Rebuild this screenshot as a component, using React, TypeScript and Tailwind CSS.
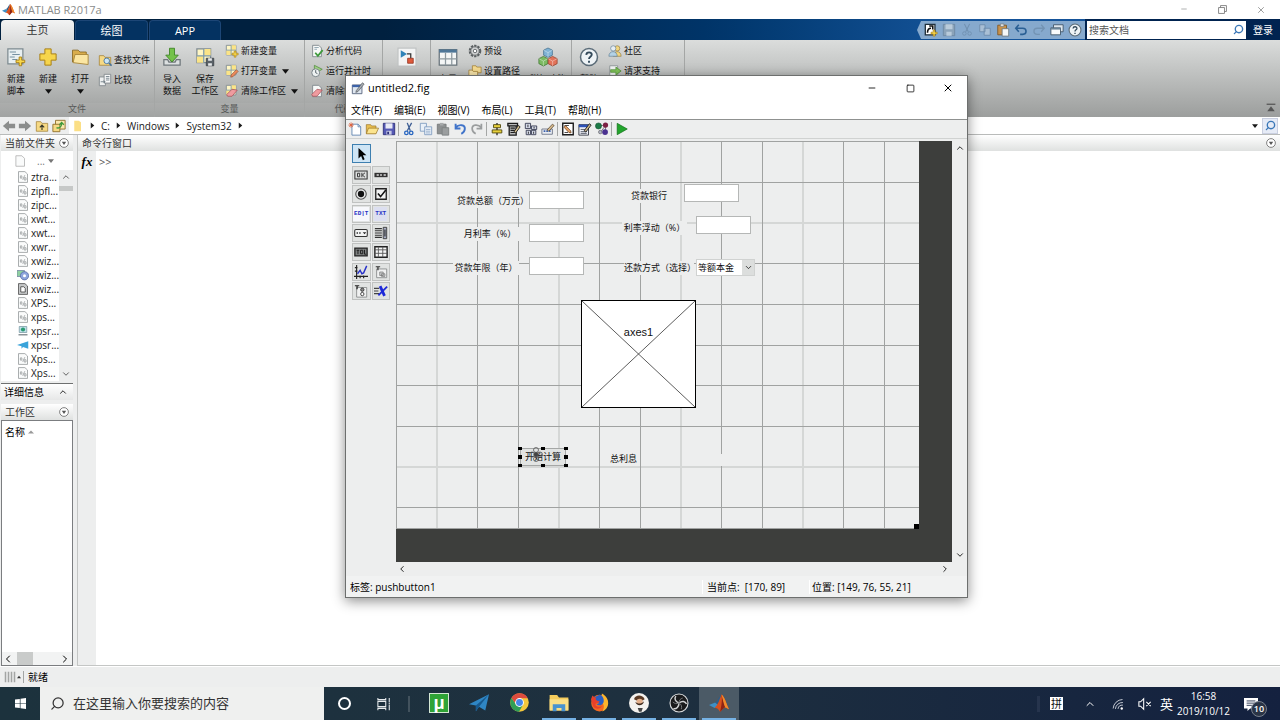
import type { ReactNode } from "react"
import { ChevronDown, ChevronLeft, ChevronRight, ChevronUp, Minus, Search, Square, X } from "lucide-react"
import { clsx } from "clsx"

interface IconProps {
  className?: string
  children: ReactNode
}

// every drawing below uses a 16 unit box
function Icon({ className = "size-[14px]", children }: IconProps) {
  return (
    <svg viewBox="0 0 16 16" className={clsx("shrink-0", className)} fill="none" aria-hidden="true">
      {children}
    </svg>
  )
}

function DownMark({ className = "size-[7px]" }: { className?: string }) {
  return (
    <Icon className={className}>
      <path d="M0 3h16l-8 10z" fill="currentColor" />
    </Icon>
  )
}

function RightMark() {
  return (
    <Icon className="mx-[5px] size-[7px]">
      <path d="M4 1v14l8-7z" fill="currentColor" />
    </Icon>
  )
}

function MatlabLogo({ className }: { className?: string }) {
  return (
    <Icon className={className}>
      <path d="M0 9.5 5 7.5 7.5 9.5 4.5 12z" fill="#3f8fc4" />
      <path d="M5 7.5C7 6.5 8 3 10 1.2L7.5 9.5z" fill="#2b5f8c" />
      <path d="M10 1.2C8.5 5 7.5 9 4.5 12c2-.3 3.200.9 4.300 3 1.800-.8 3-3.800 4.200-3.500 1 .2 1.800.8 3 1.500C14 9 12.500 3 10 1.200z" fill="#d9501e" />
      <path d="M10 1.200C10.800 5 10 11 8.800 15c1.800-.8 3-3.800 4.200-3.500C12 8 11.200 4 10 1.200z" fill="#8e2415" />
      <path d="M10 1.200c1 3.500 1.500 7 3 10.300 1 .2 1.800.8 3 1.500C14 9 12.500 3 10 1.200z" fill="#f08a2c" />
    </Icon>
  )
}

const plus = <path d="M10.500 8h2v2.500H15v2h-2.500V15h-2v-2.500H8v-2h2.500z" fill="#f8d749" stroke="#a67c14" strokeWidth=".7" />
const sheet = <path d="M3 1.500h7l3 3v10H3z" fill="#f7f9f8" stroke="#7d8589" />
const gridSheet = (
  <>
    <path d="M1.500 1.500h11v11h-11z" fill="#fff6c4" stroke="#7f8b93" />
    <path d="M7 1.500h5.500V7H7zM1.500 7H7v5.500H1.500z" fill="#fbe487" />
    <path d="M7 1.500v11M1.500 7h11" stroke="#7f9cae" />
  </>
)
const folder = <path d="M1.500 3h5l1.500 2h6.500v9h-13z" fill="#f6d984" stroke="#9d7a2d" strokeWidth=".8" />
const eraser = <path d="m2 12 6-6 6 1-6 7H3z" fill="#ef9b9f" stroke="#a34d55" strokeWidth=".8" />

const icons: Record<string, ReactNode> = {
  script: (
    <>
      <path d="M1.500 1.500h12v12h-12z" fill="#e8eff1" stroke="#7d8a90" />
      <path d="M3 4h5M5 6h6M3 8h4M5 10h4" stroke="#7590a0" strokeWidth=".8" />
      {plus}
    </>
  ),
  create: <path d="M5.500 1.500h5v4h4v5h-4v4h-5v-4h-4v-5h4z" fill="#f6d54c" stroke="#a98118" strokeWidth=".8" />,
  open: (
    <>
      <path d="M2 2.500h4.500L8 4h5v8H2z" fill="#d9ad4c" stroke="#8c6c26" strokeWidth=".7" />
      <path d="M4 6h10.500v8L2.500 12.500z" fill="#fbe6a2" stroke="#a68336" strokeWidth=".7" />
    </>
  ),
  find: (
    <>
      {folder}
      <circle cx="10" cy="9" r="3.200" fill="#cbe6f7" stroke="#46729b" />
      <path d="m12.500 11.500 3 3" stroke="#46729b" strokeWidth="1.800" />
    </>
  ),
  compare: (
    <>
      <path d="M1.500 4.500h7v10h-7z" fill="#eef0f0" stroke="#80878b" />
      <path d="M7 1.500h7.500v10H7z" fill="#f8f9f9" stroke="#80878b" />
      <path d="M3 10h5M6.500 8.500 8 10l-1.500 1.500M9 4h4M9 6h4M9 8h4" stroke="#62717b" strokeWidth=".9" />
    </>
  ),
  importData: (
    <>
      <path d="M1.500 10h3l1 2h5l1-2h3v4.500h-13z" fill="#dce0e1" stroke="#6e767a" />
      <path d="M6 1h4v5.500h3L8 12 3 6.500h3z" fill="#74c24a" stroke="#3d8423" strokeWidth=".7" />
    </>
  ),
  saveSpace: (
    <>
      {gridSheet}
      <path d="M9 9h6v6H9z" fill="#5a6268" stroke="#363c40" strokeWidth=".6" />
      <path d="M10.500 9h3v2h-3zM10.500 13h3v2h-3z" fill="#e6e9ea" />
    </>
  ),
  newVar: (
    <>
      {gridSheet}
      {plus}
    </>
  ),
  openVar: (
    <>
      {gridSheet}
      <path d="m7 12.500 6-6 2 2-6 6-2.500.5z" fill="#ec8a5a" stroke="#8c4a2e" strokeWidth=".7" />
    </>
  ),
  clearSpace: (
    <>
      {gridSheet}
      {eraser}
    </>
  ),
  analyze: (
    <>
      {sheet}
      <path d="M5 4h5M5 6h3" stroke="#8aa0ac" />
      <path d="m6 10 3 3.500L14.500 7" stroke="#3e9a3b" strokeWidth="2" />
    </>
  ),
  runTime: (
    <>
      <path d="M5 1.500 14 6l-9 5z" fill="#9ed084" stroke="#4c8738" strokeWidth=".8" />
      <circle cx="6.500" cy="10" r="4.500" fill="#eef2f2" stroke="#6f7a7f" />
      <path d="M6.500 7v3l2 1" stroke="#45525a" />
    </>
  ),
  clearCmd: (
    <>
      {sheet}
      {eraser}
    </>
  ),
  simulink: (
    <>
      <path d="M.8.8h14.400v14.400H.8z" fill="#f3f4f4" stroke="#c1c4c4" />
      <path d="M8 5.500h3V9" stroke="#333" />
      <path d="M8.500 9H13v4H8.500z" fill="#df5a3c" stroke="#8c2b18" strokeWidth=".6" />
      <path d="M3 2.500 8 5.500 3 8.500z" fill="#2f83b8" />
    </>
  ),
  layout: (
    <>
      <path d="M1 2h14v12.500H1z" fill="#f4f6f6" stroke="#68747b" />
      <path d="M1 2h14v2.500H1z" fill="#4e7697" />
      <path d="M6 4.500v10M11 4.500v10M1 9.500h14" stroke="#8d999f" />
    </>
  ),
  gear: (
    <>
      <circle cx="8" cy="8" r="6" stroke="#5a5f61" strokeWidth="2.400" strokeDasharray="2.600 1.200" />
      <circle cx="8" cy="8" r="4.800" fill="#d4d6d6" stroke="#5a5f61" />
      <circle cx="8" cy="8" r="2" fill="#fff" stroke="#5a5f61" />
    </>
  ),
  path: (
    <>
      <path d="M5 2h4l1 1.500h5V10H5z" fill="#f6dc92" stroke="#9d7a2d" strokeWidth=".8" />
      <path d="M1 7h4l1 1.500h5V14H1z" fill="#fbe7ac" stroke="#9d7a2d" strokeWidth=".8" />
    </>
  ),
  cubes: (
    <>
      <path d="m8 .8 3.500 1.700v4L8 8.300 4.500 6.500v-4z" fill="#7fb3d5" stroke="#44708f" strokeWidth=".6" />
      <path d="m4.300 7.500 3.600 1.800v4l-3.600 1.900-3.600-1.900v-4z" fill="#7cba63" stroke="#3f7530" strokeWidth=".6" />
      <path d="m11.700 7.500 3.600 1.800v4l-3.600 1.900-3.600-1.900v-4z" fill="#e2735a" stroke="#96402c" strokeWidth=".6" />
      <path d="m4.500 2.500 3.500 2 3.500-2M8 4.500v3.800M.7 9.300l3.600 2 3.600-2M4.300 11.300v3.900M8.100 9.300l3.600 2 3.600-2M11.700 11.300v3.900" stroke="#fff" strokeOpacity=".6" strokeWidth=".5" />
    </>
  ),
  help: (
    <>
      <circle cx="8" cy="8" r="6.800" fill="#eef3f6" stroke="#5b6c78" strokeWidth="1.200" />
      <path d="M5.800 6.300C6 3.500 10.300 3.700 10.200 6.200 10.100 7.800 8 7.800 8 9.600M8 11v1.500" stroke="#32495a" strokeWidth="1.500" />
    </>
  ),
  community: (
    <>
      <circle cx="10.500" cy="5" r="3" fill="#f2d67f" stroke="#8b7336" strokeWidth=".7" />
      <path d="M6 14c0-7 9-7 9 0z" fill="#f2d67f" stroke="#8b7336" strokeWidth=".7" />
      <circle cx="6" cy="5" r="3" fill="#e6edf2" stroke="#5a7990" strokeWidth=".7" />
      <path d="M1 14c0-7 9.500-7 9.500 0z" fill="#b3d2e6" stroke="#5a7990" strokeWidth=".7" />
    </>
  ),
  support: (
    <>
      <path d="M2 2h9v12H2z" fill="#f1f3f3" stroke="#8b9295" />
      <path d="M3 6.500h6V3.500L15 8l-6 4.500v-3H3z" fill="#82c45b" stroke="#3d8423" strokeWidth=".7" />
    </>
  ),
  shortcut: (
    <>
      <path d="M1.500 1.500h11v12h-11z" fill="#fff" stroke="#20303c" strokeWidth="1.500" />
      <path d="M4 11c0-4 2-5 4-5M6 3.500h4v4" stroke="#111" strokeWidth="1.800" />
      {plus}
    </>
  ),
  disk: (
    <>
      <path d="M1.500 1.500h13v13h-13z" fill="#8ba3b9" stroke="#6d88a2" />
      <path d="M4 1.500h8V7H4zM5 10h6v4.500H5z" fill="#b9cbdb" />
    </>
  ),
  cutDim: (
    <>
      <path d="m5 1 4.500 9M11 1 6.500 10" stroke="#7090b0" strokeWidth="1.200" />
      <circle cx="5" cy="12" r="2" stroke="#7090b0" />
      <circle cx="11" cy="12" r="2" stroke="#7090b0" />
    </>
  ),
  copyDim: <path d="M2 2h6v8H2zM7 6h7v8H7z" fill="#a9bfd5" stroke="#6d8bab" />,
  clipboard: (
    <>
      <path d="M2 2.500h10v11H2z" fill="#c8924c" stroke="#805827" />
      <path d="M5 1h4v3H5z" fill="#dde1e3" stroke="#69737a" strokeWidth=".7" />
      <path d="M7 6.500h7.500v8.500H7z" fill="#f5f7f8" stroke="#6d7980" />
    </>
  ),
  undo: <path d="M2 6h8c5 0 5 7 0 7H7M5.500 2 2 6l3.500 4" stroke="#2a5f94" strokeWidth="1.800" />,
  redoDim: <path d="M14 6H6C1 6 1 13 6 13h3M10.500 2 14 6l-3.500 4" stroke="#7393b3" strokeWidth="1.500" />,
  windows: (
    <>
      <path d="M4 2h11v8H4z" fill="#dfe7ee" stroke="#3f5567" />
      <path d="M1 5.500h11v8H1z" fill="#f8fafb" stroke="#3f5567" />
      <path d="M1 5.500h11v2H1z" fill="#6b8598" />
    </>
  ),
  folderUp: (
    <>
      {folder}
      <path d="M8 12.500v-5M5.500 9.500 8 7l2.500 2.500" stroke="#3b3a2a" strokeWidth="1.300" />
    </>
  ),
  folderBrowse: (
    <>
      <path d="M4 1.500h11v10H4z" fill="#fbe7ac" stroke="#8c6c26" />
      <path d="M1 6h8v8.500H1z" fill="#f6d984" stroke="#8c6c26" />
      <path d="M5 10c3 1 6-1 6-5M8.500 6.500 11 4l2.500 2.500" stroke="#3e9a3b" strokeWidth="1.500" />
    </>
  ),
  figure: (
    <>
      <path d="M1.500 4.500h11v10h-11z" fill="#dfe7f0" stroke="#53617a" />
      <path d="M1.500 4.500h11V7h-11z" fill="#3c62a8" />
      <path d="m6 11 7-9 2 1.500-7 8.500-2.500 1z" fill="#a9aeb3" stroke="#464b50" strokeWidth=".7" />
    </>
  ),
  newFile: (
    <>
      <path d="M4.500 2.500h7l3 3v9.500h-10z" fill="#fff" stroke="#5b82b0" />
      <path d="M11.500 2.500v3h3" stroke="#5b82b0" />
      <path d="M3.500.5v6M.5 3.500h6M1.500 1.500l4 4M5.500 1.500l-4 4" stroke="#e0603a" />
    </>
  ),
  openFile: (
    <>
      <path d="M1.500 3h5l1 1.500h5V13h-11z" fill="#e9bf52" stroke="#9b7626" strokeWidth=".8" />
      <path d="M4 7h11.500l-3 6.500h-11z" fill="#fbe48e" stroke="#9b7626" strokeWidth=".8" />
    </>
  ),
  saveFile: (
    <>
      <path d="M1.500 1.500h13v13h-13z" fill="#5458b4" stroke="#2b2e77" />
      <path d="M4 1.500h8V7.500H4z" fill="#e8eaf6" />
      <path d="M5 10h6v4.500H5z" fill="#c6c9e4" />
      <path d="M6 11h2v3H6z" fill="#2b2e77" />
    </>
  ),
  cut: (
    <>
      <path d="m6 1 3.500 9M11 1 6 10" stroke="#3d5e94" strokeWidth="1.500" />
      <circle cx="5" cy="12.500" r="2" stroke="#2866c0" strokeWidth="1.500" />
      <circle cx="10.500" cy="12.500" r="2" stroke="#2866c0" strokeWidth="1.500" />
    </>
  ),
  copy: (
    <>
      <path d="M1.500 1.500h7v9h-7z" fill="#e9f0f8" stroke="#7f9cc0" />
      <path d="M6.500 5.500h8v9h-8z" fill="#e9f0f8" stroke="#7f9cc0" />
      <path d="M8 8.500h5M8 10.500h5M8 12.500h5" stroke="#7f9cc0" strokeWidth=".8" />
    </>
  ),
  paste: (
    <>
      <path d="M1.500 2.500h10v11h-10z" fill="#8d9091" stroke="#76797a" />
      <path d="M4.500 1h4v3h-4z" fill="#a7aaab" />
      <path d="M7 6.500h7.500V15H7z" fill="#9b9e9f" stroke="#7d8081" />
    </>
  ),
  undoBlue: <path d="M3 6.500C7 2 14 3 13.500 8c-.2 2.500-2 4.500-4 5.500M3 2v5.500h5.500" stroke="#3f73c9" strokeWidth="2.200" />,
  redoGray: <path d="M13 6.500C9 2 2 3 2.500 8c.2 2.500 2 4.500 4 5.500M13 2v5.500H7.500" stroke="#9a9d9e" strokeWidth="2" />,
  align: (
    <>
      <path d="M8 1v14" stroke="#222" strokeWidth="1.500" />
      <path d="M4 3h8v3.500H4zM2.500 9h11v3.500h-11z" fill="#e6cf3c" stroke="#4f470c" />
    </>
  ),
  menuEdit: (
    <>
      <path d="M1 1.500h11v3H1zM2.500 4.500h8V15h-8z" fill="#b9bbbb" stroke="#1c1c1c" strokeWidth="1.500" />
      <path d="M4 7h5M4 9.500h5M4 12h5" stroke="#1c1c1c" strokeWidth="1.300" />
      <path d="m8 11 5-7 2 1.500-5 7z" fill="#d8c38f" stroke="#1c1c1c" />
    </>
  ),
  tabOrder: (
    <>
      <path d="M1.500 1.500h6v6h-6zM8.500 4.500h6v4h-6zM2.500 9.500h5v5h-5zM8.500 9.500h5v5h-5z" fill="#d5dae8" stroke="#34384e" />
      <path d="M4.500 3v3M5 11v2.500M11 11v2.500M11.500 5.500v2" stroke="#222" />
    </>
  ),
  toolEdit: (
    <>
      <path d="M1 8h12v6H1z" fill="#e9ecf2" stroke="#6b7486" />
      <path d="M3 10.500h8" stroke="#3f64ad" strokeWidth="2" strokeDasharray="2 1" />
      <path d="m7 9 6-6.500 2 1.500-6 6.500z" fill="#d8b98c" stroke="#4a3c24" strokeWidth=".8" />
    </>
  ),
  mfile: (
    <>
      <path d="M2 1.500h12v13H2z" fill="#fff" stroke="#1d1d1d" strokeWidth="1.600" />
      <path d="M4 4h5M4 12h4" stroke="#333" />
      <path d="m5 4 6 6 .5 2.500L9 12 3.500 6z" fill="#e7a368" stroke="#5b3413" strokeWidth=".8" />
    </>
  ),
  inspector: (
    <>
      <path d="M1 3h11v12H1z" fill="#eef0f7" stroke="#31353f" />
      <path d="M1 3h11v3H1z" fill="#2c51b8" />
      <path d="M3 8.500h6M3 11h7M3 13h7" stroke="#4b5060" />
      <path d="m7 10 6-8 2 1.500-6 8z" fill="#c9b48a" stroke="#1c1c1c" />
    </>
  ),
  browser: (
    <>
      <path d="M4 4h8L6 12M12 4v8" stroke="#555" strokeWidth=".8" />
      <circle cx="4" cy="4.500" r="3.500" fill="#1c7a48" stroke="#0d4b29" strokeWidth=".6" />
      <circle cx="12" cy="3.500" r="3" fill="#7c2344" />
      <circle cx="6" cy="11.500" r="2" fill="#aeb2c4" stroke="#444" strokeWidth=".6" />
      <circle cx="11.500" cy="11.500" r="3.300" fill="#4a3190" />
    </>
  ),
  run: <path d="M2.500 1.500 14 8 2.500 14.500z" fill="#22a52c" stroke="#127018" strokeWidth=".8" />,
  arrow: <path d="M4 1v12l3-2.800 2 4.800 2-1-2-4.500h4z" fill="#000" />,
  pushbutton: (
    <>
      <path d="M1 3.500h14v9H1z" fill="#dcdede" stroke="#333" strokeWidth="1.200" />
      <path d="M4 6h2.500v4H4zM9 5.500v5M12.500 5.500 9.500 8l3 2.500" stroke="#333" strokeWidth="1.100" />
    </>
  ),
  slider: (
    <>
      <path d="M.5 5.500h15v5H.5z" fill="#333" />
      <path d="M3 8h2.500M7 8h2M11 8h2.500" stroke="#ddd" strokeWidth="1.500" />
    </>
  ),
  radio: (
    <>
      <circle cx="8" cy="8" r="6" fill="#e9eaea" stroke="#555" strokeWidth="1.300" />
      <circle cx="8" cy="8" r="3.600" fill="#111" />
    </>
  ),
  checkbox: (
    <>
      <path d="M2 2h12v12H2z" fill="#f2f3f3" stroke="#222" strokeWidth="1.500" />
      <path d="m4.500 7.500 3 3.500 6-7.500" stroke="#111" strokeWidth="1.800" />
    </>
  ),
  table: (
    <>
      <path d="M1 2h14v12H1z" fill="#f5f6f6" stroke="#222" strokeWidth="1.600" />
      <path d="M1 5.500h14M1 9.500h14M5 2v12M10 2v12" stroke="#555" />
    </>
  ),
  popup: (
    <>
      <rect x=".8" y="4" width="14.400" height="8" rx="1.500" fill="#f2f3f3" stroke="#333" strokeWidth="1.200" />
      <path d="M3 8h1.500M6 8h1.500" stroke="#222" strokeWidth="1.600" />
      <path d="M10 7h4l-2 2.500z" fill="#222" />
    </>
  ),
  listbox: (
    <>
      <path d="M1 3h8M1 5.500h8M1 8h8M1 10.500h8M1 13h8" stroke="#333" strokeWidth="1.200" />
      <path d="M10.500 1.500h4v13h-4z" fill="#aab0c6" stroke="#333" />
      <path d="M12.500 4v8" stroke="#333" strokeWidth="1.400" />
    </>
  ),
  toggle: (
    <>
      <path d="M1 3.500h14v9H1z" fill="#7d8080" stroke="#222" strokeWidth="1.500" />
      <path d="M3 6h3M4.500 6v4.500M7.500 6H10v4H7.500zM12 5.500v5h2" stroke="#1c1c1c" strokeWidth="1.100" />
    </>
  ),
  axes: (
    <>
      <path d="M3 0v16M0 13h16M1 3h3M1 7h3M7 12v3M11 12v3" stroke="#222" strokeWidth="1.300" />
      <path d="m4 10 3-4 2 4 2-1 3.500-8" stroke="#2630c8" strokeWidth="1.600" />
    </>
  ),
  panel: (
    <>
      <path d="M3 4.500h11.500v10H3z" fill="#f0f1f1" stroke="#888b8b" />
      <path d="M2 2h5M4.500 2v4" stroke="#333" strokeWidth="1.400" />
      <path d="M6.500 8h4v4h-4zM8.500 10h4v3h-4z" fill="#c9cccc" stroke="#777" strokeWidth=".8" />
    </>
  ),
  group: (
    <>
      <path d="M3 4h11.500v11H3z" fill="#f0f1f1" stroke="#888b8b" />
      <path d="M1 2h5M3.500 2v4" stroke="#222" strokeWidth="1.400" />
      <circle cx="9.500" cy="6.500" r="1.900" fill="#888" stroke="#333" />
      <circle cx="9.500" cy="11.500" r="1.900" fill="#fff" stroke="#333" />
    </>
  ),
  activex: (
    <>
      <path d="M0 5h6M0 8h5M0 11h6" stroke="#444" strokeWidth="1.300" />
      <path d="m7 2.500 5 11" stroke="#1d28d8" strokeWidth="3.200" />
      <path d="M15 3 5 13" stroke="#1d28d8" strokeWidth="2" />
    </>
  ),
}

const quickAccess = [
  { icon: "shortcut", label: "快捷方式" },
  { icon: "disk", label: "保存" },
  { icon: "cutDim", label: "剪切" },
  { icon: "copyDim", label: "复制" },
  { icon: "clipboard", label: "粘贴" },
  { icon: "undo", label: "撤消" },
  { icon: "redoDim", label: "重做" },
  { icon: "windows", label: "切换窗口" },
  { icon: "help", label: "帮助" },
]

const files = [
  { name: "ztra...", kind: "dll" },
  { name: "zipfl...", kind: "dll" },
  { name: "zipc...", kind: "dll" },
  { name: "xwt...", kind: "dll" },
  { name: "xwt...", kind: "dll" },
  { name: "xwr...", kind: "dll" },
  { name: "xwiz...", kind: "dll" },
  { name: "xwiz...", kind: "app" },
  { name: "xwiz...", kind: "doc" },
  { name: "XPS...", kind: "dll" },
  { name: "xps...", kind: "dll" },
  { name: "xpsr...", kind: "install" },
  { name: "xpsr...", kind: "plane" },
  { name: "Xps...", kind: "dll" },
  { name: "Xps...", kind: "dll" },
]

const menus = ["文件(F)", "编辑(E)", "视图(V)", "布局(L)", "工具(T)", "帮助(H)"]

const figTools = [
  ["newFile", "openFile", "saveFile"],
  ["cut", "copy", "paste", "undoBlue", "redoGray"],
  ["align", "menuEdit", "tabOrder", "toolEdit"],
  ["mfile", "inspector", "browser"],
  ["run"],
]

const palette = [
  "pushbutton", "slider", "radio", "checkbox", "edit", "text", "popup",
  "listbox", "toggle", "table", "axes", "panel", "group", "activex",
]

const fields = [
  { id: "total", label: "贷款总额（万元）", labelPos: "left-[61px] top-[53px] w-[72px]", inputPos: "left-[133px] top-[50px]" },
  { id: "rate", label: "月利率（%）", labelPos: "left-[65px] top-[86px] w-[58px]", inputPos: "left-[133px] top-[83px]" },
  { id: "years", label: "贷款年限（年）", labelPos: "left-[57px] top-[120px] w-[66px]", inputPos: "left-[133px] top-[116px]" },
  { id: "bank", label: "贷款银行", labelPos: "left-[228px] top-[48px] w-[50px]", inputPos: "left-[288px] top-[43px]" },
  { id: "float", label: "利率浮动（%）", labelPos: "left-[226px] top-[80px] w-[65px]", inputPos: "left-[300px] top-[75px]" },
]

function FileIcon({ kind }: { kind: string }) {
  if (kind === "plane") {
    return (
      <Icon className="size-3">
        <path d="M0 8 15 3v10L8 10.500 6 13V9.500z" fill="#39a3da" />
      </Icon>
    )
  }
  if (kind === "install") {
    return (
      <Icon className="size-3">
        <path d="M3 2h10v8H3z" fill="#bfe0ea" stroke="#7a98a2" />
        <circle cx="8" cy="6" r="2.800" fill="#2b9a72" />
        <path d="M2 13h12" stroke="#8b9498" strokeWidth="2" />
      </Icon>
    )
  }
  if (kind === "app") {
    return (
      <Icon className="size-3">
        <path d="M0 2h10v8H0z" fill="#8fd0a0" stroke="#6f7fa0" />
        <circle cx="10" cy="9" r="5.500" fill="#8da4dc" stroke="#5366a0" />
        <circle cx="10" cy="9" r="2" fill="#fff" />
      </Icon>
    )
  }
  return (
    <Icon className="size-3">
      <path d="M2 .8h8.500L14 4v11.200H2z" fill={kind === "doc" ? "#c6c8c9" : "#fafbfb"} stroke={kind === "doc" ? "#444" : "#8f9394"} />
      {kind === "doc" ? (
        <path d="M5 5h4l2 2v5H5z" fill="#fff" stroke="#333" />
      ) : (
        <path d="M4.500 6.500h2v3h-2zM10.500 5.500l-3 6M9.500 9h2.500v3H9.500z" stroke="#94989a" />
      )}
    </Icon>
  )
}

interface BigButtonProps {
  icon: string
  label?: string
  lines?: string[]
  arrow?: boolean
  className?: string
}

function BigButton({ icon, label, lines = [], arrow, className = "w-8" }: BigButtonProps) {
  return (
    <button aria-label={label} className={clsx("flex shrink-0 flex-col items-center pt-[7px]", className)}>
      <Icon className="size-5">{icons[icon]}</Icon>
      <span className="mt-[6px] flex flex-col items-center whitespace-nowrap">
        {lines.map((line) => (
          <span key={line}>{line}</span>
        ))}
      </span>
      {arrow && <DownMark className="mt-[3px] size-[7px]" />}
    </button>
  )
}

function SmallButton({ icon, label, arrow }: { icon: string; label: string; arrow?: boolean }) {
  return (
    <button className="flex h-5 items-center gap-[2px] whitespace-nowrap">
      <Icon>{icons[icon]}</Icon>
      {label}
      {arrow && <DownMark className="ml-[3px] size-[7px]" />}
    </button>
  )
}

function Group({ title, className, children }: { title?: string; className: string; children: ReactNode }) {
  return (
    <section className={clsx("flex shrink-0 flex-col border-r border-[#a4a6a5]", className)}>
      <div className="flex flex-1">{children}</div>
      <h2 className="h-[14px] bg-white/5 text-center text-[#565857]">{title}</h2>
    </section>
  )
}

function Ribbon() {
  return (
    <div className="flex h-[77px] shrink-0 bg-linear-to-b from-[#dbdddc] to-[#9c9e9d] text-[9px] leading-3 text-[#111]">
      <Group title="文件" className="w-[155px]">
        <BigButton icon="script" lines={["新建", "脚本"]} />
        <BigButton icon="create" lines={["新建"]} arrow />
        <BigButton icon="open" lines={["打开"]} arrow />
        <div className="flex flex-col pt-[10px] pl-[2px]">
          <SmallButton icon="find" label="查找文件" />
          <SmallButton icon="compare" label="比较" />
        </div>
      </Group>
      <Group title="变量" className="w-[150px]">
        <BigButton icon="importData" lines={["导入", "数据"]} className="w-[34px]" />
        <BigButton icon="saveSpace" lines={["保存", "工作区"]} />
        <div className="flex flex-col pt-[1px] pl-1">
          <SmallButton icon="newVar" label="新建变量" />
          <SmallButton icon="openVar" label="打开变量" arrow />
          <SmallButton icon="clearSpace" label="清除工作区" arrow />
        </div>
      </Group>
      <Group title="代码" className="w-[78px]">
        <div className="flex flex-col pt-[1px] pl-[5px]">
          <SmallButton icon="analyze" label="分析代码" />
          <SmallButton icon="runTime" label="运行并计时" />
          <SmallButton icon="clearCmd" label="清除命令" />
        </div>
      </Group>
      <Group className="w-12">
        <BigButton icon="simulink" label="Simulink" className="w-12" />
      </Group>
      <Group className="w-[141px]">
        <BigButton icon="layout" lines={["布局"]} className="w-[34px]" />
        <div className="flex w-[66px] flex-col pt-[1px] pl-[3px]">
          <SmallButton icon="gear" label="预设" />
          <SmallButton icon="path" label="设置路径" />
        </div>
        <BigButton icon="cubes" lines={["附加功能"]} className="w-[34px]" />
      </Group>
      <Group className="w-[113px]">
        <BigButton icon="help" lines={["帮助"]} className="w-[34px]" />
        <div className="flex flex-col pt-[1px] pl-[2px]">
          <SmallButton icon="community" label="社区" />
          <SmallButton icon="support" label="请求支持" />
        </div>
      </Group>
      <button aria-label="折叠工具条" className="mt-auto ml-auto p-1">
        <Icon className="size-[10px]">
          <path d="M1 2h14" stroke="#555" strokeWidth="2" />
          <path d="m8 5 6 8H2z" fill="#555" />
        </Icon>
      </button>
    </div>
  )
}

function PanelHeader({ title, className }: { title: string; className?: string }) {
  return (
    <div className={clsx("flex h-4 shrink-0 items-center justify-between bg-linear-to-b from-white to-[#dfe1e0] px-1 text-[#333]", className)}>
      <h2 className="whitespace-nowrap">{title}</h2>
      <button aria-label={`${title}选项`}>
        <Icon className="size-[10px]">
          <circle cx="8" cy="8" r="7" fill="#fff" stroke="#666" strokeWidth="1.300" />
          <path d="M4.500 6h7L8 11z" fill="#555" />
        </Icon>
      </button>
    </div>
  )
}

function Sidebar() {
  return (
    <aside className="flex w-[73px] shrink-0 flex-col pl-[1px]">
      <PanelHeader title="当前文件夹" />
      <div className="flex min-h-0 flex-1 flex-col">
        <div className="flex h-[19px] items-center bg-white pl-[13px] text-[#777]">
          <Icon className="size-3">
            <path d="M2.500 1h8L14 4.500V15H2.500z" fill="#fafbfb" stroke="#aaa" />
          </Icon>
          <span className="pr-[3px] pl-[11px]">...</span>
          <DownMark className="size-[6px]" />
        </div>
        <div className="flex flex-1 bg-white">
          <ul className="min-w-0 flex-1 overflow-hidden">
            {files.map((file, index) => (
              <li key={index} className="flex h-[14px] items-center gap-[2px] pl-4 text-[#1a1a1a]">
                <FileIcon kind={file.kind} />
                {file.name}
              </li>
            ))}
          </ul>
          <div className="flex w-[14px] flex-col items-center justify-between bg-[#edeeee] py-[2px] text-[#444]">
            <div className="flex w-full flex-col items-center gap-1">
              <ChevronUp className="size-[10px]" />
              <div className="h-[5px] w-full bg-[#c6c8c7]" />
            </div>
            <ChevronDown className="size-[10px]" />
          </div>
        </div>
        <button className="mt-[2px] flex h-[17px] items-center justify-between border-t border-[#6e7070] bg-linear-to-b from-white to-[#e6e7e7] px-[3px]">
          详细信息
          <ChevronUp className="mr-[2px] size-[10px]" />
        </button>
      </div>
      <PanelHeader title="工作区" className="mt-1" />
      <div className="flex h-[246px] shrink-0 flex-col justify-between border border-[#7b7d80] bg-white">
        <div className="flex h-[21px] items-center gap-[3px] pl-[3px]">
          名称
          <Icon className="size-[6px]">
            <path d="M0 12h16L8 4z" fill="#999" />
          </Icon>
        </div>
        <div className="flex h-[13px] items-center bg-[#f2f3f3]">
          <ChevronLeft className="size-3" />
          <div className="ml-[3px] h-full w-4 bg-[#c9cbca]" />
          <ChevronRight className="mr-[1px] ml-auto size-3" />
        </div>
      </div>
    </aside>
  )
}

function PaletteGlyph({ name }: { name: string }) {
  if (name === "edit") {
    return <span className="bg-[#f7f8fc] px-[1px] font-['Liberation_Mono'] text-[6px] font-bold text-[#2832c4]">ED|T</span>
  }
  if (name === "text") {
    return <span className="bg-[#dcdff0] px-[1px] font-['Liberation_Mono'] text-[6px] font-bold text-[#2832c4]">TXT</span>
  }
  return <Icon>{icons[name]}</Icon>
}

function GridLines() {
  const dark = [0, 81, 122, 203, 244, 325, 366, 447, 488]
  const light = [41, 163, 285, 407]
  const rows = [0, 41, 122, 163, 204, 244, 285, 366, 387]
  return (
    <svg className="absolute inset-0 size-full" aria-hidden="true" shapeRendering="crispEdges">
      {light.map((x) => (
        <rect key={x} x={x - 1} y="0" width="2" height="388" fill="#d5d7d6" />
      ))}
      {[82, 326].map((y) => (
        <rect key={y} x="0" y={y - 1} width="523" height="2" fill="#d5d7d6" />
      ))}
      {dark.map((x) => (
        <rect key={x} x={x} y="0" width="1" height="388" fill="#a0a2a1" />
      ))}
      {rows.map((y) => (
        <rect key={y} x="0" y={y} width="523" height="1" fill="#a0a2a1" />
      ))}
    </svg>
  )
}

function Canvas() {
  return (
    <div className="relative h-[388px] w-[523px] bg-[#edeeee] text-[9px] leading-[14px] text-[#111]">
      <GridLines />
      {fields.map((field) => (
        <div key={field.id}>
          <label htmlFor={field.id} className={clsx("absolute bg-[#edeeee] text-center whitespace-nowrap", field.labelPos)}>
            {field.label}
          </label>
          <input id={field.id} className={clsx("absolute h-[18px] w-[55px] border border-[#b5b7b6] bg-white px-1", field.inputPos)} />
        </div>
      ))}
      <label htmlFor="method" className="absolute top-[120px] left-[228px] w-[70px] bg-[#edeeee] whitespace-nowrap">
        还款方式（选择）
      </label>
      <div className="absolute top-[118px] left-[300px] flex h-[17px] w-[59px] border border-[#d0d2d1] bg-white">
        <select id="method" className="min-w-0 flex-1 appearance-none pl-[1px] leading-[15px]">
          <option>等额本金</option>
        </select>
        <span className="flex w-3 items-center justify-center bg-[#dcdedd]">
          <ChevronDown className="size-[9px]" />
        </span>
      </div>

      <div className="absolute top-[159px] left-[185px] h-[108px] w-[115px] border border-black bg-white">
        <svg className="size-full" viewBox="0 0 113 106" preserveAspectRatio="none" aria-hidden="true">
          <path d="m0 0 113 106M113 0 0 106" stroke="#333" strokeWidth=".8" />
        </svg>
        <span className="absolute inset-x-0 top-6 text-center font-['Liberation_Sans'] text-[11px]">axes1</span>
      </div>

      <button className="absolute top-[307px] left-[124px] h-[18px] w-[46px] border border-[#a5a7a6] bg-[#e2e4e3] leading-4">开始计算</button>
      <svg className="absolute top-[305px] left-[122px] h-[22px] w-[50px]" viewBox="0 0 50 22" aria-hidden="true">
        {[0, 23, 46].map((x) => (
          <g key={x}>
            <rect x={x} y="1" width="4" height="3" fill="#000" />
            <rect x={x} y="18" width="4" height="3" fill="#000" />
            {x !== 23 && <rect x={x} y="9" width="4" height="4" fill="#000" />}
          </g>
        ))}
        {/* mouse pointer in its move shape */}
        <g fill="none" stroke="#555" strokeWidth=".8">
          <circle cx="18" cy="4" r="2.500" />
          <circle cx="18" cy="13" r="2.500" />
          <circle cx="14" cy="8.500" r="2.500" />
          <circle cx="22" cy="8.500" r="2.500" />
          <circle cx="18" cy="8.500" r="2.200" fill="#444" />
        </g>
      </svg>
      <span className="absolute top-[311px] left-[210px] w-[34px] bg-[#edeeee] pl-1">总利息</span>
      <span className="absolute top-[313px] left-[300px] h-3 w-[50px] bg-[#edeeee]" />
      <span className="absolute right-0 bottom-0 size-[5px] bg-black" />
    </div>
  )
}

function FigureWindow() {
  return (
    <div className="absolute top-[75px] left-[345px] flex h-[523px] w-[623px] flex-col border border-[#6d6f6e] bg-[#edeeee] shadow-[0_3px_12px_rgba(0,0,0,0.45)]">
      <div className="flex h-6 shrink-0 items-center bg-white">
        <Icon className="ml-[5px] size-[14px]">{icons.figure}</Icon>
        <h1 className="ml-[3px] text-[11px]">untitled2.fig</h1>
        <div className="ml-auto flex">
          <button aria-label="最小化" className="flex w-[38px] items-center justify-center">
            <Minus className="size-[10px]" />
          </button>
          <button aria-label="最大化" className="flex w-[38px] items-center justify-center">
            <Square className="size-[9px]" />
          </button>
          <button aria-label="关闭" className="flex w-[38px] items-center justify-center">
            <X className="size-3" />
          </button>
        </div>
      </div>
      <nav className="flex h-5 shrink-0 items-center gap-3 border-b border-[#8f9190] bg-white pl-[5px]">
        {menus.map((menu) => (
          <button key={menu}>{menu}</button>
        ))}
      </nav>
      <div className="flex h-[19px] shrink-0 items-center border-b border-[#d0d2d1]">
        {figTools.map((tools, index) => (
          <div key={index} className="flex items-center">
            {index > 0 && <span className="mx-[1px] h-[14px] w-[1px] bg-[#a5a7a6]" />}
            {tools.map((tool) => (
              <button key={tool} aria-label={tool} className="flex w-[17px] justify-center">
                <Icon className="size-[14px]">{icons[tool]}</Icon>
              </button>
            ))}
          </div>
        ))}
      </div>
      <div className="flex min-h-0 flex-1 pt-[2px]">
        <div className="w-[50px] shrink-0 pt-[3px] pl-[6px]">
          <button aria-label="选择" className="flex size-[19px] items-center justify-center border border-[#3d7fb0] bg-[#cfe5f5]">
            <Icon>{icons.arrow}</Icon>
          </button>
          <div className="mt-[3px] grid h-[134px] w-[38px] grid-cols-2 content-between gap-x-[1px]">
            {palette.map((name) => (
              <button key={name} aria-label={name} className="flex h-[18px] items-center justify-center border border-[#c0c2c1] bg-[#e1e3e2]">
                <PaletteGlyph name={name} />
              </button>
            ))}
          </div>
        </div>
        <div className="flex min-w-0 flex-1 flex-col">
          <div className="flex min-h-0 flex-1">
            <div className="flex-1 bg-[#3d3e3c]">
              <Canvas />
            </div>
            <div className="flex w-[15px] flex-col items-center justify-between py-[2px]">
              <ChevronUp className="size-[10px]" />
              <ChevronDown className="size-[10px]" />
            </div>
          </div>
          <div className="flex h-[14px] items-center justify-between pr-[17px] pl-[1px]">
            <ChevronLeft className="size-[10px]" />
            <ChevronRight className="size-[10px]" />
          </div>
        </div>
      </div>
      <footer className="flex h-[21px] shrink-0 items-center bg-[#f1f2f2] pl-1">
        <span className="flex-1">标签: pushbutton1</span>
        <span className="w-[107px] border-l border-white pl-1 whitespace-pre">当前点:  [170, 89]</span>
        <span className="w-[158px] border-l border-white pl-[2px]">位置: [149, 76, 55, 21]</span>
      </footer>
    </div>
  )
}

function TaskIcon({ name }: { name: string }) {
  switch (name) {
    case "utorrent":
      return (
        <span className="flex size-5 items-center justify-center border border-[#d5e8d5] bg-[#2fa336] text-[17px] leading-none font-bold text-white">µ</span>
      )
    case "telegram":
      return (
        <Icon className="size-5">
          <path d="M0 9 16 1l-3 13-5-3-2.500 3.500V10z" fill="#2f86c4" />
          <path d="M5.500 10 16 1 8 11l-2.500 3.500z" fill="#17598e" />
        </Icon>
      )
    case "chrome":
      return (
        <Icon className="size-[19px]">
          <circle cx="8" cy="8" r="7.800" fill="#f3c73c" />
          <path d="M1.200 4.200A7.800 7.800 0 0 1 14.900 4.400H8L5 9.500z" fill="#dd4b3e" />
          <path d="M1.200 4.200A7.800 7.800 0 0 0 7.600 15.800L11 9.800 5 9.500z" fill="#2f9e57" />
          <circle cx="8" cy="8" r="3.700" fill="#fff" />
          <circle cx="8" cy="8" r="2.900" fill="#4787ea" />
        </Icon>
      )
    case "explorer":
      return (
        <Icon className="size-5">
          <path d="M.5 1.500h6L8 3.500h7.500V14H.5z" fill="#f5cc5c" />
          <path d="M.5 5h15v9H.5z" fill="#fbdf86" />
          <path d="M3 14.500V9h10v5.500h-3V12H6v2.500z" fill="#4a93cf" />
        </Icon>
      )
    case "firefox":
      return (
        <Icon className="size-[19px]">
          <circle cx="8" cy="8.500" r="7" fill="#f26a21" />
          <path d="M10 .5c3 1.500 5.500 4.500 5.300 8.500-.3 3-2 5.500-5 6.500 2-3 2-6-1-8z" fill="#fdb52c" />
          <path d="M1 6C2 4 3 3 5 3l3-1.500c2.500.5 4 3 3.500 6-1 3-4 3.500-6 2L8 8.500 5 7z" fill="#2a5fc4" />
          <path d="M.8 5C1.500 4 1.500 3 2 2c1 1 2 1.500 3.500 2C4 5 5 6.500 8 7c-1 2-3 1-3.500 3 1.500 2 4 2 5.500 1-1 3-6 3-7.500 0z" fill="#e8402b" />
        </Icon>
      )
    case "avatar":
      return (
        <Icon className="size-5">
          <circle cx="8" cy="8" r="8" fill="#f4f2ee" />
          <path d="M4 5c1-4 7-4 8.500 0L11 6H6z" fill="#5b3a24" />
          <circle cx="8.500" cy="7" r="2.500" fill="#e5b18c" />
          <path d="M5 7c2 2 5 2 7-.5-.5 4-6 4.500-7 .5z" fill="#3e2a1d" />
          <path d="M7 12h4l-1 3H8z" fill="#444" />
        </Icon>
      )
    case "obs":
      return (
        <Icon className="size-5">
          <circle cx="8" cy="8" r="7.200" fill="#191a1c" stroke="#d6d8da" strokeWidth=".9" />
          <path d="M8 8C5 7 4 4.500 5.500 2.500M8 8c2.500-2 5-1.500 6 .8M8 8c0 3-2 5-4.500 4.500" stroke="#cfd1d3" strokeWidth="1.200" />
          <path d="M8 8c0-2 1-3.500 3-4M8 8c2 1 2.500 3 1.800 5M8 8c-2 1-3.500.5-5-.8" stroke="#73777a" strokeWidth=".8" />
        </Icon>
      )
    default:
      return <MatlabLogo className="size-5" />
  }
}

const tasks = [
  { name: "utorrent", open: false },
  { name: "telegram", open: false },
  { name: "chrome", open: false },
  { name: "explorer", open: true },
  { name: "firefox", open: true },
  { name: "avatar", open: true },
  { name: "obs", open: true },
  { name: "matlab", open: true },
]

function Taskbar() {
  return (
    <div className="flex h-[33px] shrink-0 items-stretch bg-linear-to-r from-[#1c323d] via-[#1e303f] to-[#14213f] text-white">
      <button aria-label="开始" className="flex w-10 items-center justify-center">
        <Icon className="size-[11px]">
          <path d="M0 2.300 7 1.300v6.200H0zM8 1.200 16 0v7.500H8zM0 8.500h7v6.200l-7-1zM8 8.500h8V16l-8-1.200z" fill="#fff" />
        </Icon>
      </button>
      <label className="flex w-[284px] items-center gap-2 bg-[#eff0ef] pl-[10px] text-[#333]">
        <Search className="size-[15px] -scale-x-100" strokeWidth={2} />
        <input
          aria-label="搜索"
          className="min-w-0 flex-1 pb-[2px] text-[13px] placeholder:text-[#333]"
          placeholder="在这里输入你要搜索的内容"
        />
      </label>
      <button aria-label="Cortana" className="flex w-10 items-center justify-center">
        <span className="size-[13px] rounded-full border-2 border-white" />
      </button>
      <button aria-label="任务视图" className="flex w-10 items-center justify-center">
        <Icon>
          <path d="M1 1v2h9V1M1 15v-2h9v2M1 5h9v6H1zM14 1v5M14 9v6M14 6.500v2" stroke="#e6eaec" strokeWidth="1.200" />
        </Icon>
      </button>
      <span className="mx-1 my-auto h-4 w-[2px] bg-[#42525d]" />
      <div className="ml-[5px] flex">
        {tasks.map((task) => (
          <button
            key={task.name}
            aria-label={task.name}
            className={clsx("flex w-10 flex-col items-center justify-end", task.name === "matlab" && "bg-[#4b5a66]")}
          >
            <span className="flex flex-1 items-center">
              <TaskIcon name={task.name} />
            </span>
            <span className={clsx("h-[2px] w-[34px]", task.open && "bg-[#76b2e4]")} />
          </button>
        ))}
      </div>
      <div className="ml-auto flex items-center">
        <span className="mr-[10px] h-4 w-[3px] bg-[#26344d]" />
        <button className="mr-[21px] size-[13px] bg-white text-[11px] leading-[13px] text-[#111]">拼</button>
        <ChevronUp className="mr-4 size-3" />
        <Icon className="mr-[14px] size-3">
          <path d="M1.500 14A13 13 0 0 1 14 2M4.500 14.500A9.500 9.500 0 0 1 14.500 6M8 14.500A6 6 0 0 1 14.500 9.500" stroke="#c6ccd5" strokeWidth="1.300" />
          <circle cx="13" cy="14" r="1.600" fill="#fff" />
        </Icon>
        <Icon className="mr-2 size-[14px]">
          <path d="M1 5.500h2L6.500 2v12L3 10.500H1zM9.500 5.500l5 5M14.500 5.500l-5 5" stroke="#fff" strokeWidth="1.200" />
        </Icon>
        <button className="text-[13px]">英</button>
        <div className="mx-1 text-center text-[10px] leading-[15px]">
          <div>16:58</div>
          <div>2019/10/12</div>
        </div>
        <button aria-label="通知" className="relative ml-[10px] flex h-6 w-9 items-center">
          <Icon className="size-[14px]">
            <path d="M0 1h16v12H7l-3 3v-3H0z" fill="#fff" />
            <path d="M3 4.500h10M3 7h10M3 9.500h6" stroke="#1b2843" />
          </Icon>
          <span className="absolute top-[9px] left-[7px] flex size-4 items-center justify-center rounded-full border border-[#777f8c] bg-[#2a3446] text-[9px] font-semibold">
            10
          </span>
        </button>
      </div>
    </div>
  )
}

export default function App() {
  return (
    <div className="relative flex h-screen w-full flex-col overflow-hidden bg-[#edeeee] font-['Open_Sans','Noto_Sans_CJK_SC',sans-serif] text-[10px] leading-[14px] text-black">
      <header className="flex h-[19px] shrink-0 items-center bg-white pl-[2px] text-[#8a8c8b]">
        <MatlabLogo className="size-[13px]" />
        <h1 className="ml-[3px] text-[11px]">MATLAB R2017a</h1>
        <div className="ml-auto flex">
          <button aria-label="最小化" className="flex w-[38px] justify-center">
            <Minus className="size-2" />
          </button>
          <button aria-label="还原" className="flex w-[38px] justify-center">
            <Icon className="size-[9px]">
              <path d="M1 4.500h10.500V15H1zM4.500 4.500V1H15v10.500h-3.500" stroke="#777" strokeWidth="1.500" />
            </Icon>
          </button>
          <button aria-label="关闭" className="flex w-[39px] justify-center">
            <X className="size-[10px]" />
          </button>
        </div>
      </header>

      <div className="flex h-[21px] shrink-0 items-end bg-linear-to-r from-[#00203f] from-30% via-[#003468] via-55% to-[#15549a] to-75% text-[11px]">
        <nav className="flex gap-[1px] pl-[1px]">
          <button className="h-5 w-[73px] rounded-t-sm bg-linear-to-b from-[#f3f4f4] to-[#dcdddd] text-[#333]">主页</button>
          <button className="h-5 w-[73px] rounded-t-sm border border-b-0 border-[#1d4676] bg-[#043261] text-white">绘图</button>
          <button className="h-5 w-[72px] rounded-t-sm border border-b-0 border-[#1d4676] bg-[#043261] text-white">APP</button>
        </nav>
        <div className="ml-auto flex h-full items-center">
          <svg viewBox="0 0 4 18" className="h-[18px] w-1" aria-hidden="true">
            <path d="M4 0 0 9l4 9z" fill="#86a9cd" />
          </svg>
          <div className="flex h-[18px] items-center gap-1 bg-[#86a9cd] px-[3px]">
            {quickAccess.map((item) => (
              <button key={item.icon} aria-label={item.label}>
                <Icon>{icons[item.icon]}</Icon>
              </button>
            ))}
          </div>
          <div className="flex h-full items-center bg-[#002350] pl-[2px]">
            <label className="flex h-[18px] w-[159px] items-center bg-white px-[2px]">
              <input aria-label="搜索文档" placeholder="搜索文档" className="min-w-0 flex-1 text-[10px] placeholder:text-[#555]" />
              <Search className="size-[11px] -scale-x-100 text-[#3b78b8]" strokeWidth={3} />
            </label>
            <button className="w-[34px] text-[10px] text-white">登录</button>
          </div>
        </div>
      </div>

      <Ribbon />

      <div className="flex h-[18px] shrink-0 items-center border-b border-[#b9bbba] pl-[2px]">
        <button aria-label="后退">
          <Icon className="size-[14px]">
            <path d="m1 8 7-6v3.500h7v5H8V14z" fill="#8b8d8c" />
          </Icon>
        </button>
        <button aria-label="前进" className="ml-[2px]">
          <Icon className="size-[14px]">
            <path d="M15 8 8 2v3.500H1v5h7V14z" fill="#8b8d8c" />
          </Icon>
        </button>
        <button aria-label="上一级" className="ml-[3px]">
          <Icon>{icons.folderUp}</Icon>
        </button>
        <button aria-label="浏览" className="ml-[3px]">
          <Icon>{icons.folderBrowse}</Icon>
        </button>
        <div className="ml-[3px] flex h-full flex-1 items-center bg-white pl-[3px] text-[#1a1a1a]">
          <Icon className="size-3">
            <path d="M3 1h6l3 2v12H3z" fill="#fbdf86" />
          </Icon>
          {["C:", "Windows", "System32"].map((part) => (
            <span key={part} className="flex items-center">
              <RightMark />
              {part}
            </span>
          ))}
          <RightMark />
          <DownMark className="mr-1 ml-auto size-[6px]" />
          <button aria-label="搜索" className="mr-[2px] flex size-4 items-center justify-center border border-[#c9cfe0] bg-[#e6ebf6]">
            <Search className="size-[11px] -scale-x-100 text-[#3b78b8]" strokeWidth={3} />
          </button>
        </div>
      </div>

      <div className="flex min-h-0 flex-1">
        <Sidebar />
        <main className="ml-1 flex flex-1 flex-col border-b border-l border-[#c4c6c5]">
          <PanelHeader title="命令行窗口" />
          <div className="flex flex-1 bg-white">
            <div className="w-[18px] bg-[#edeeee] pt-1 text-center font-['Liberation_Serif'] text-[13px] font-bold italic">fx</div>
            <p className="pt-1 pl-[3px] text-[11px] text-[#555]">&gt;&gt;</p>
          </div>
        </main>
      </div>

      <footer className="flex h-[21px] shrink-0 items-center border-t border-white pl-1">
        <Icon className="size-3">
          <path d="M2 1v14M6 1v14M10 1v14M14 1v14" stroke="#a3a5a4" strokeWidth="2" />
        </Icon>
        <span className="border-r border-[#a3a5a4] py-1 pr-[2px] pl-[1px]">
          <Icon className="size-1">
            <path d="M0 13h16L8 3z" fill="#333" />
          </Icon>
        </span>
        <span className="pl-1">就绪</span>
      </footer>

      <Taskbar />
      <FigureWindow />
    </div>
  )
}
